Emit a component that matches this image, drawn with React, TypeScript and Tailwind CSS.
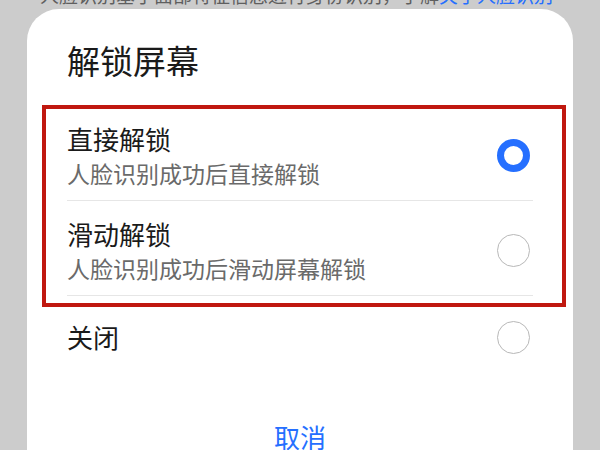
import React from 'react';

type Option = {
    key: string;
    title: string;
    desc?: string;
};

const OPTIONS: Option[] = [
    { key: 'direct', title: '直接解锁', desc: '人脸识别成功后直接解锁' },
    { key: 'slide', title: '滑动解锁', desc: '人脸识别成功后滑动屏幕解锁' },
];

const FONT = "font-['Noto_Sans_CJK_SC','Noto_Sans',sans-serif]";

const Radio: React.FC<{ checked: boolean }> = ({ checked }) =>
    checked ? (
        <span className="block mr-[3px] w-[33px] h-[33px] rounded-full border-[7px] border-[#256fff] bg-white shrink-0" />
    ) : (
        <span className="block mr-[3px] w-[33px] h-[33px] rounded-full border-[1.5px] border-[#b8b8b8] bg-white shrink-0" />
    );

export default function App() {
    const selected = 'direct';

    return (
        <div className={`${FONT} w-[600px] h-[450px] overflow-hidden bg-[#cccccc]`}>
            {/* text of the page behind the sheet, cut off at the top */}
            <div className="h-[9px] overflow-hidden pl-[40px]">
                <p className="-mt-[15px] whitespace-nowrap text-[19px] leading-[20px] text-[#5f5f5f]">
                    人脸识别基于面部特征信息进行身份识别，了解
                    <span className="text-[#256fff]">关于人脸识别</span>
                </p>
            </div>

            <div className="mx-[27px] bg-white rounded-t-[32px] h-[460px]">
                <div className="px-[40px] pt-[29px] pb-[24px]">
                    <h1 className="text-[33px] leading-[44px] text-[#1a1a1a]">解锁屏幕</h1>
                </div>

                <div className="relative px-[40px]">
                    {OPTIONS.map((opt) => (
                        <div
                            key={opt.key}
                            className="flex items-center justify-between border-b border-[#e6e6e6] pt-[15px] pb-[11px] h-[95px]"
                        >
                            <div>
                                <div className="text-[26px] leading-[36px] text-[#1a1a1a]">{opt.title}</div>
                                <div className="text-[23px] leading-[32px] text-[#6a6a6a]">{opt.desc}</div>
                            </div>
                            <Radio checked={selected === opt.key} />
                        </div>
                    ))}

                    <div className="flex items-center justify-between h-[82px]">
                        <div className="text-[26px] leading-[36px] text-[#1a1a1a]">关闭</div>
                        <Radio checked={false} />
                    </div>

                    {/* annotation box round the first two options */}
                    <div className="absolute -top-[1px] left-[15px] right-[7px] h-[202px] border-[4px] border-[#c0180f] pointer-events-none" />
                </div>

                <div className="pt-[41px] text-center">
                    <button type="button" className="text-[26px] leading-[36px] text-[#256fff]">
                        取消
                    </button>
                </div>
            </div>
        </div>
    );
}
